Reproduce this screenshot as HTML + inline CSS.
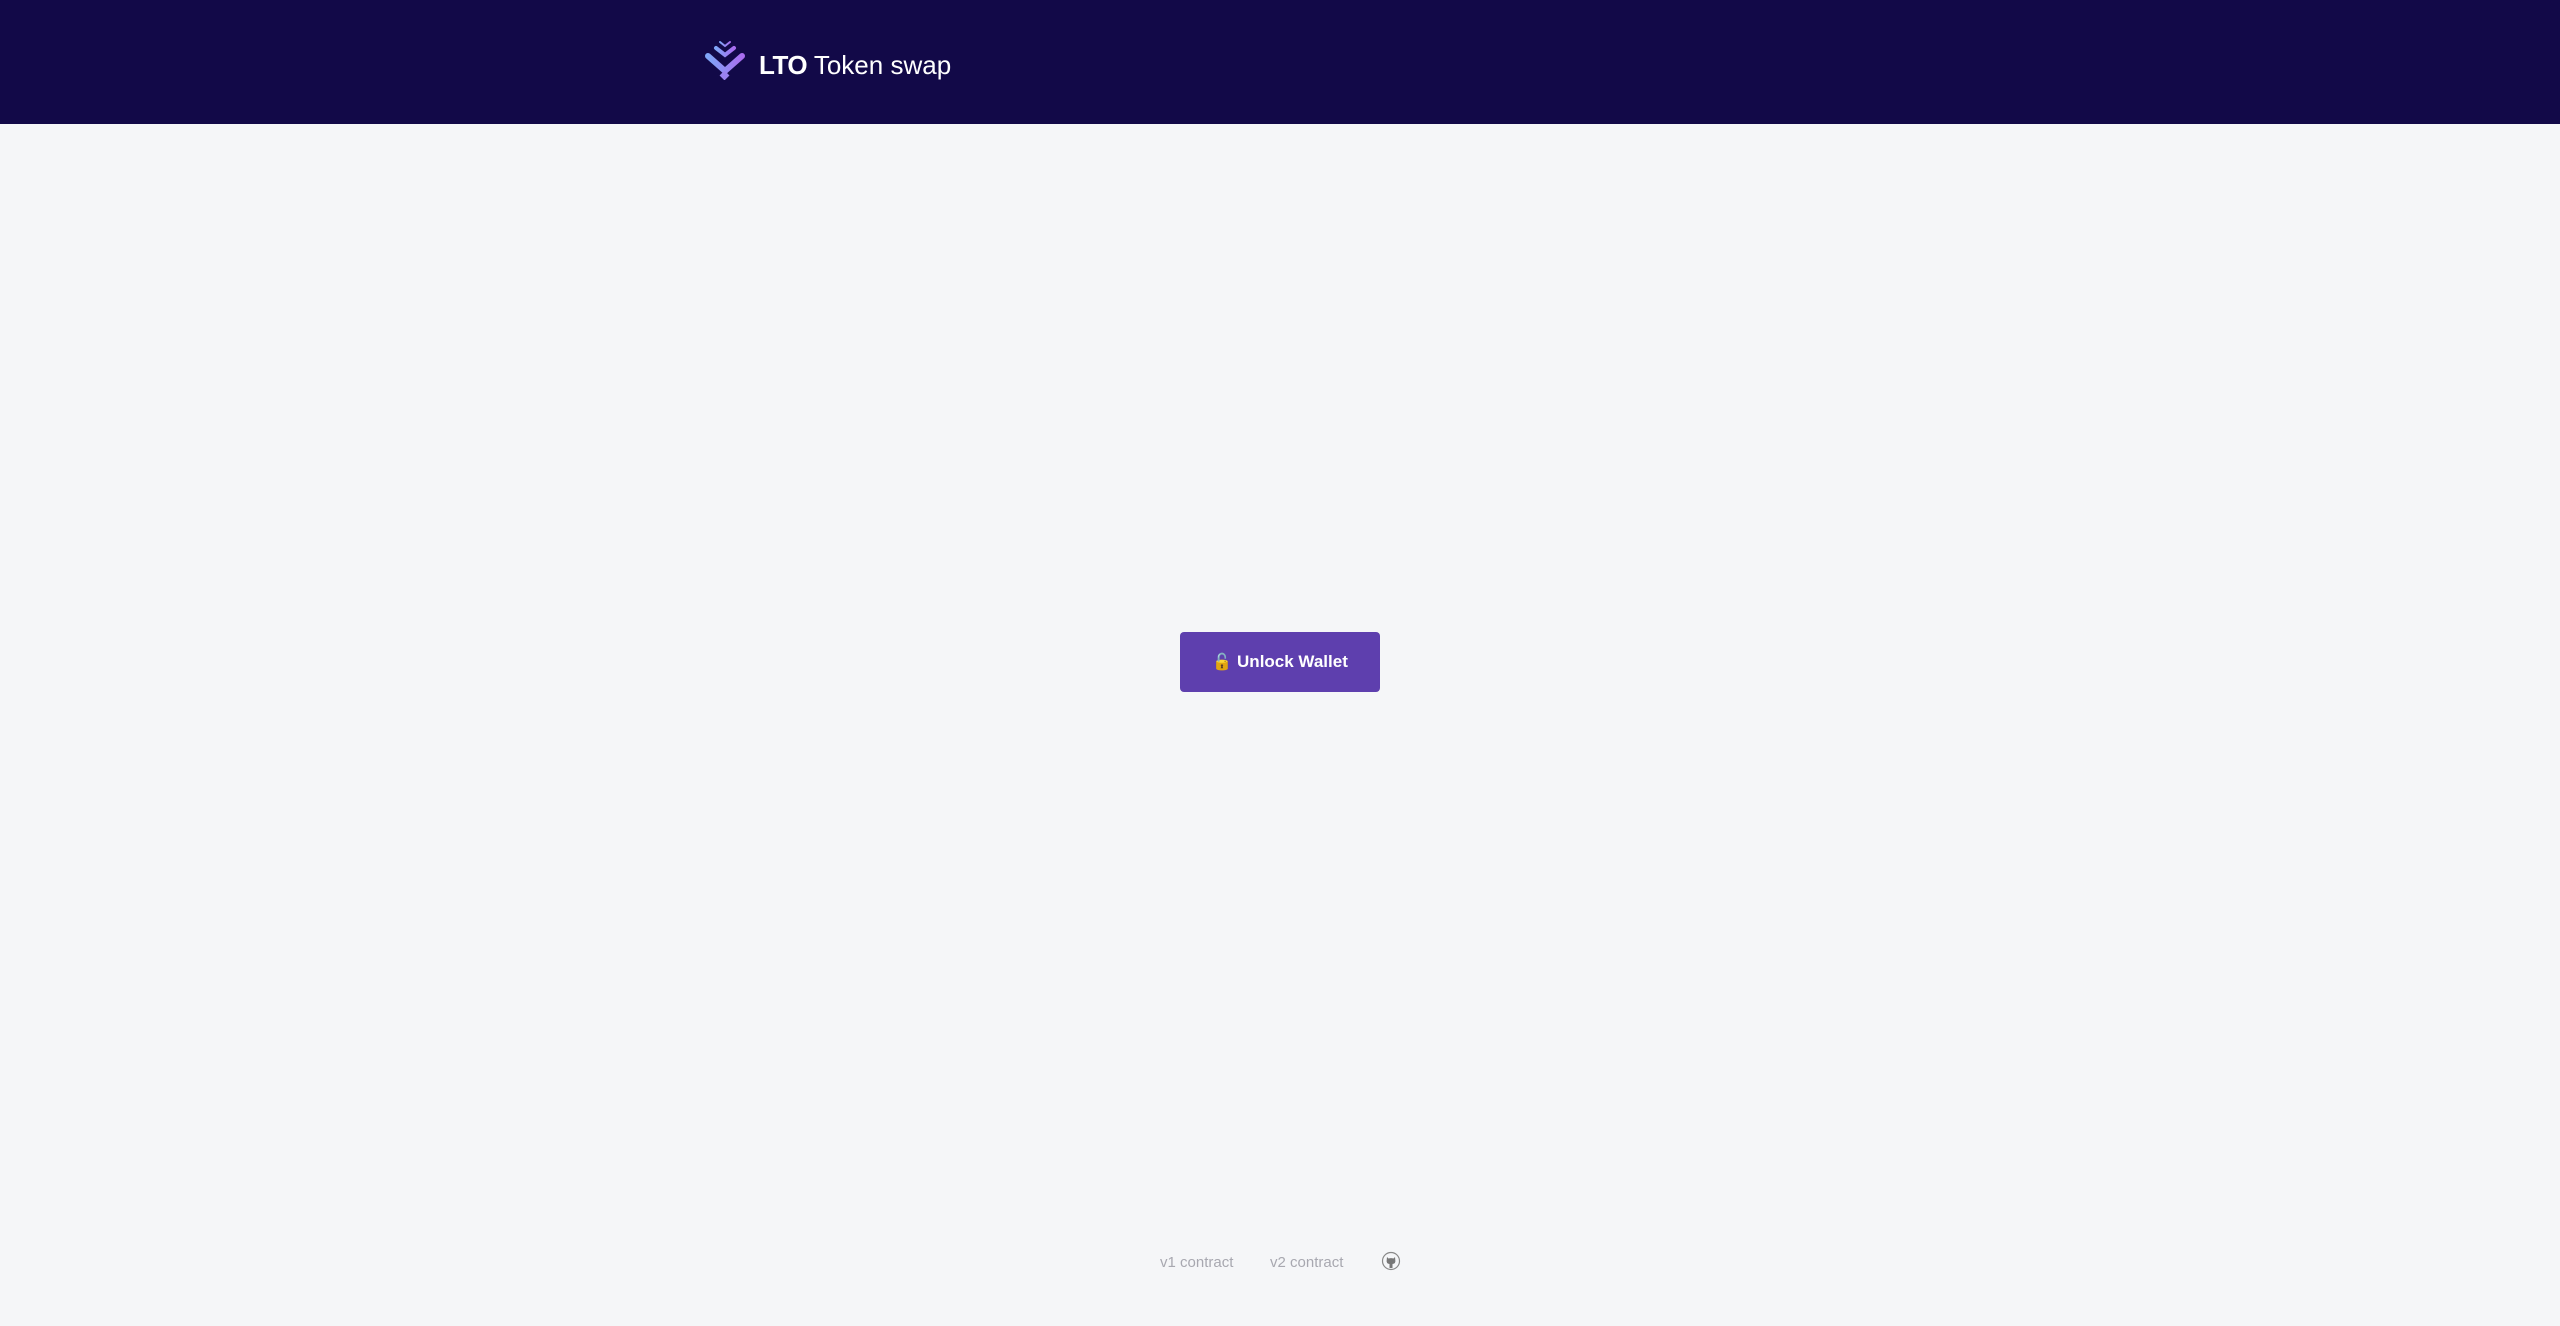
<!DOCTYPE html>
<html><head><style>
html,body{margin:0;padding:0;width:2560px;height:1326px;background:#f5f6f8;font-family:"Liberation Sans",sans-serif;overflow:hidden}
.hdr{position:absolute;left:0;top:0;width:2560px;height:124px;background:#120948}
.logo{position:absolute;left:702px;top:38px}
.title{position:absolute;left:759px;top:48px;color:#fff;font-size:26px;line-height:34px;white-space:nowrap}
.title b{font-weight:bold;letter-spacing:-0.5px}
.btn{position:absolute;left:1180px;top:632px;width:200px;height:60px;background:#5e3fae;border-radius:4px;color:#fff;font-weight:bold;font-size:17px;display:flex;align-items:center;justify-content:center;gap:5px}
.foot{position:absolute;top:1253px;font-size:15px;color:#a8a8b0;line-height:20px}
</style></head><body>
<div class="hdr">
<svg class="logo" width="46" height="42" viewBox="0 0 46 42">
<defs><linearGradient id="g" x1="0" x2="1" y1="0" y2="0"><stop offset="0" stop-color="#7fa6f8"/><stop offset="1" stop-color="#a96df0"/></linearGradient></defs>
<g stroke="url(#g)" stroke-linecap="round" fill="none">
<path d="M18 4 L23 8 L28 4" stroke-width="2"/>
<path d="M14 10 L23 17 L32 10" stroke-width="4"/>
<path d="M6 18 L23 33 L40 18" stroke-width="6"/>
</g>
<rect x="19" y="34" width="7" height="7" transform="rotate(45 22.5 37.5)" fill="#9a82f0"/>
</svg>
<div class="title"><b>LTO</b> Token swap</div>
</div>
<div class="btn"><span style="font-size:16px">🔓</span>Unlock Wallet</div>
<div class="foot" style="left:1160px">v1 contract</div>
<div class="foot" style="left:1270px">v2 contract</div>
<svg style="position:absolute;left:1381px;top:1251px" width="20" height="20" viewBox="0 0 20 20"><circle cx="10" cy="10" r="8.5" fill="none" stroke="#888" stroke-width="1.2"/><path d="M6 6 L7.5 7.5 Q10 6.8 12.5 7.5 L14 6 L14.3 9 Q15 12.5 11.5 13 L11.5 17 L8.5 17 L8.5 13 Q5 12.5 5.7 9 Z" fill="#777"/></svg>
</body></html>
